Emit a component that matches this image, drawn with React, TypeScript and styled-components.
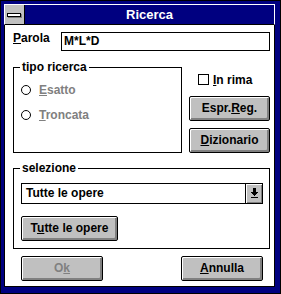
import styled, { createGlobalStyle } from "styled-components";

const GlobalStyle = createGlobalStyle`
  html, body {
    margin: 0;
    padding: 0;
    background: #000080;
  }
  body {
    font-family: "Liberation Sans", Arial, sans-serif;
    font-size: 12px;
    font-weight: bold;
  }
`;

const Window = styled.div`
  width: 281px;
  height: 294px;
  box-sizing: border-box;
  border: 1px solid #000;
  background: #000080;
  padding: 3px 5px 6px 3px;
`;

const TitleBar = styled.div`
  display: flex;
  height: 19px;
  border: 1px solid #fff;
  border-bottom-color: #000;
  background: #000080;
`;

const SysMenu = styled.div`
  width: 19px;
  height: 19px;
  background: #c0c0c0;
  border-right: 1px solid #000;
  display: flex;
  align-items: center;
  justify-content: center;
`;

const SysBar = styled.div`
  width: 12px;
  height: 2px;
  margin: 1px 1px 0 0;
  background: #fff;
  border: 1px solid #000;
  box-shadow: 1px 1px 0 #808080;
`;

const Caption = styled.div`
  flex: 1;
  color: #fff;
  font-size: 13px;
  line-height: 19px;
  text-align: center;
`;

const Client = styled.div`
  height: 261px;
  background: #fff;
  border: 1px solid #000;
  border-top: 0;
  padding: 0 4px 0 8px;
  display: flex;
  flex-direction: column;
  color: #000;
  line-height: 14px;
`;

const Row = styled.div<{ $top: number }>`
  display: flex;
  align-items: flex-start;
  margin-top: ${(p) => p.$top}px;
`;

const FieldLabel = styled.label`
  width: 48px;
  line-height: 14px;
`;

const TextBox = styled.div`
  margin-top: 1px;
  width: 209px;
  height: 19px;
  box-sizing: border-box;
  border: 1px solid #000;
  padding-left: 2px;
  line-height: 17px;
`;

const Mnemonic = styled.span`
  text-decoration: underline;
  text-underline-offset: 1px;
`;

const GroupBox = styled.div<{ $w: number; $h: number }>`
  width: ${(p) => p.$w}px;
  height: ${(p) => p.$h}px;
  box-sizing: border-box;
  border: 1px solid #000;
  padding-left: 7px;
  display: flex;
  flex-direction: column;
  align-items: flex-start;
`;

const GroupTitle = styled.div`
  margin: -8px 0 0 -1px;
  padding: 0 2px;
  background: #fff;
  line-height: 14px;
`;

const RadioRow = styled.div<{ $top: number }>`
  display: flex;
  align-items: center;
  height: 14px;
  margin-top: ${(p) => p.$top}px;
  color: #808080;
`;

const RadioDot = styled.span`
  width: 10px;
  height: 10px;
  box-sizing: border-box;
  border: 1px solid #000;
  border-radius: 50%;
  background: #fff;
  margin-right: 8px;
`;

const SideColumn = styled.div`
  width: 81px;
  margin-left: 7px;
  display: flex;
  flex-direction: column;
`;

const CheckRow = styled.div`
  display: flex;
  align-items: center;
  gap: 4px;
  height: 11px;
  margin: 7px 0 0 9px;
`;

const CheckBox = styled.span`
  width: 11px;
  height: 11px;
  box-sizing: border-box;
  border: 1px solid #000;
  background: #fff;
`;

const Button = styled.div<{ $w: number; $top?: number; $disabled?: boolean }>`
  width: ${(p) => p.$w}px;
  height: 25px;
  margin-top: ${(p) => p.$top ?? 0}px;
  box-sizing: border-box;
  border: 1px solid #000;
  border-radius: 2px;
  background: #c0c0c0;
  box-shadow: inset 1px 1px 0 #fff, inset -2px -2px 0 #808080;
  display: flex;
  align-items: center;
  justify-content: center;
  padding-bottom: 1px;
  color: ${(p) => (p.$disabled ? "#808080" : "#000")};
`;

const ComboBox = styled.div`
  margin-top: 8px;
  width: 242px;
  height: 21px;
  box-sizing: border-box;
  border: 1px solid #000;
  display: flex;
`;

const ComboText = styled.div`
  flex: 1;
  padding-left: 4px;
  line-height: 19px;
`;

const DropButton = styled.div`
  width: 16px;
  border-left: 1px solid #000;
  background: #c0c0c0;
  box-shadow: inset 1px 1px 0 #fff, inset -1px -1px 0 #808080;
  display: flex;
  align-items: center;
  justify-content: center;
`;

const ButtonRow = styled.div`
  display: flex;
  justify-content: space-between;
  margin-top: 7px;
  padding: 0 7px 0 8px;
`;

function DropArrow() {
  return (
    <svg width="15" height="19" viewBox="0 0 15 19" shapeRendering="crispEdges">
      <rect x="6" y="4" width="3" height="4" fill="#000" />
      <rect x="4" y="8" width="7" height="1" fill="#000" />
      <rect x="5" y="9" width="5" height="1" fill="#000" />
      <rect x="6" y="10" width="3" height="1" fill="#000" />
      <rect x="7" y="11" width="1" height="1" fill="#000" />
      <rect x="4" y="13" width="7" height="1" fill="#000" />
    </svg>
  );
}

export default function App() {
  return (
    <>
      <GlobalStyle />
      <Window>
        <TitleBar>
          <SysMenu>
            <SysBar />
          </SysMenu>
          <Caption>Ricerca</Caption>
        </TitleBar>
        <Client>
          <Row $top={6}>
            <FieldLabel>
              <Mnemonic>P</Mnemonic>arola
            </FieldLabel>
            <TextBox>M*L*D</TextBox>
          </Row>

          <Row $top={16}>
            <GroupBox $w={169} $h={86}>
              <GroupTitle>tipo ricerca</GroupTitle>
              <RadioRow $top={9}>
                <RadioDot />
                <span>
                  <Mnemonic>E</Mnemonic>satto
                </span>
              </RadioRow>
              <RadioRow $top={11}>
                <RadioDot />
                <span>
                  <Mnemonic>T</Mnemonic>roncata
                </span>
              </RadioRow>
            </GroupBox>
            <SideColumn>
              <CheckRow>
                <CheckBox />
                <span>
                  <Mnemonic>I</Mnemonic>n rima
                </span>
              </CheckRow>
              <Button $w={81} $top={11}>
                <span>
                  Espr.<Mnemonic>R</Mnemonic>eg.
                </span>
              </Button>
              <Button $w={81} $top={7}>
                <span>
                  <Mnemonic>D</Mnemonic>izionario
                </span>
              </Button>
            </SideColumn>
          </Row>

          <Row $top={15}>
            <GroupBox $w={257} $h={81}>
              <GroupTitle>selezione</GroupTitle>
              <ComboBox>
                <ComboText>Tutte le opere</ComboText>
                <DropButton>
                  <DropArrow />
                </DropButton>
              </ComboBox>
              <Button $w={97} $top={12}>
                <span>
                  T<Mnemonic>u</Mnemonic>tte le opere
                </span>
              </Button>
            </GroupBox>
          </Row>

          <ButtonRow>
            <Button $w={82} $disabled>
              <span>
                O<Mnemonic>k</Mnemonic>
              </span>
            </Button>
            <Button $w={82}>
              <span>
                <Mnemonic>A</Mnemonic>nnulla
              </span>
            </Button>
          </ButtonRow>
        </Client>
      </Window>
    </>
  );
}
